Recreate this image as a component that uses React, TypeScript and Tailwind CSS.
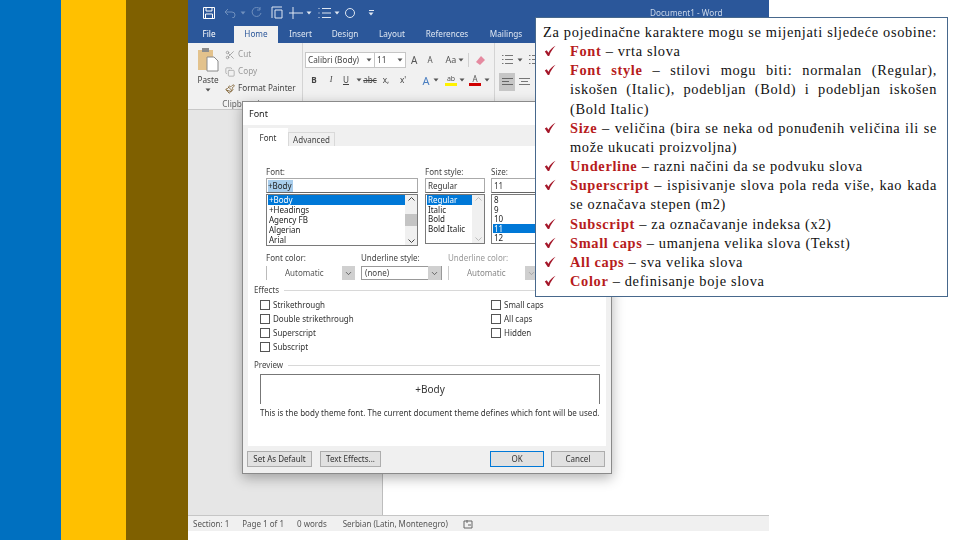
import React from 'react'
import { ChevronDown, Copy, Paintbrush, Scissors } from 'lucide-react'

const tabs = [
  { label: 'Insert', w: 'w-[45px]' },
  { label: 'Design', w: 'w-[44px]' },
  { label: 'Layout', w: 'w-[50px]' },
  { label: 'References', w: 'w-[60px]' },
  { label: 'Mailings', w: 'w-[58px]' },
]

const items = [
  { head: 'Font', lines: [' – vrta slova'] },
  {
    head: 'Font style',
    lines: [' – stilovi mogu biti: normalan (Regular),', 'iskošen (Italic), podebljan (Bold) i podebljan iskošen', '(Bold Italic)'],
  },
  { head: 'Size', lines: [' – veličina (bira se neka od ponuđenih veličina ili se', 'može ukucati proizvoljna)'] },
  { head: 'Underline', lines: [' – razni načini da se podvuku slova'] },
  { head: 'Superscript', lines: [' – ispisivanje slova pola reda više, kao kada', 'se označava stepen (m2)'] },
  { head: 'Subscript', lines: [' – za označavanje indeksa (x2)'] },
  { head: 'Small caps', lines: [' – umanjena velika slova (Tekst)'] },
  { head: 'All caps', lines: [' – sva velika slova'] },
  { head: 'Color', lines: [' – definisanje boje slova'] },
]

const Caret = ({ color = '#555' }: { color?: string }) => (
  <svg width="6" height="4" viewBox="0 0 6 4" className="shrink-0">
    <path d="M0.5 0.5h5L3 3.5z" fill={color} />
  </svg>
)

const Check = () => (
  <svg width="12" height="12" viewBox="0 0 12 12" className="mt-[2px] shrink-0">
    <path d="M0.8 6.4L2.8 5.2 4.4 7.8C6 4.800 8.400 2.400 11.600 0.800 9 3.400 6.800 6.600 5.200 11H3.800Z" fill="#a5182a" />
  </svg>
)

const ComboArrow = ({ disabled = false }: { disabled?: boolean }) => (
  <div className={`flex h-[14px] w-[13px] items-center justify-center ${disabled ? 'bg-[#cfcfcf]' : 'bg-[#d0d0d0]'}`}>
    <ChevronDown size={9} color={disabled ? '#9a9a9a' : '#444'} />
  </div>
)

const ListBox = ({
  rows,
  selected,
  w,
  h,
  rowClass,
  pale = false,
}: {
  rows: string[]
  selected: number
  w: string
  h: string
  rowClass: string
  pale?: boolean
}) => (
  <div className={`flex border border-[#7a7a7a] bg-white pl-[1px] ${w} ${h}`}>
    <div className="min-w-0 flex-1 overflow-hidden">
      {rows.map((r, i) => (
        <div
          key={r}
          className={`pl-[1px] text-[8px] ${rowClass} ${i === selected ? 'bg-[#0078d7] text-white' : 'text-[#222]'}`}
        >
          {r}
        </div>
      ))}
    </div>
    <div className="flex w-[12px] shrink-0 flex-col items-center justify-between bg-[#f0f0f0] py-[2px]">
      <svg width="7" height="4" viewBox="0 0 7 4">
        <path d="M0.5 3.5L3.5 0.5 6.5 3.5" fill="none" stroke={pale ? '#bbb' : '#444'} />
      </svg>
      {!pale && <div className="h-[12px] w-full bg-[#c4c4c4]" />}
      <svg width="7" height="4" viewBox="0 0 7 4" className={pale ? 'mt-auto' : ''}>
        <path d="M0.5 0.5L3.5 3.5 6.5 0.5" fill="none" stroke={pale ? '#bbb' : '#444'} />
      </svg>
    </div>
  </div>
)

const Effect = ({ label }: { label: string }) => (
  <div className="flex h-[14px] items-center gap-[3px]">
    <div className="h-[10px] w-[10px] border border-[#555] bg-white" />
    <span className="text-[8px] text-[#333]">{label}</span>
  </div>
)

const FieldLabel = ({ children }: { children: React.ReactNode }) => (
  <div className="flex items-center gap-[5px]">
    <span className="text-[8px] leading-[10px] text-[#444]">{children}</span>
    <div className="h-px flex-1 bg-[#d8d8d8]" />
  </div>
)

const FootButton = ({ label, w, ok = false }: { label: string; w: string; ok?: boolean }) => (
  <div
    className={`flex h-[16px] items-center justify-center border text-[8px] text-[#333] ${w} ${ok ? 'border-[#0078d7] bg-[#e1e1e1]' : 'border-[#adadad] bg-[#e1e1e1]'}`}
  >
    {label}
  </div>
)

const FontDialog = () => (
  <div
    className="absolute left-[54px] top-[101px] flex h-[373px] w-[370px] flex-col border border-[#8a8a8a] bg-[#f0f0f0] shadow-[0_4px_12px_rgba(0,0,0,0.3)]"
    style={{ fontFamily: '"Noto Sans", "Liberation Sans", sans-serif' }}
  >
    <div className="flex h-[23px] shrink-0 items-center bg-white pl-[6px] text-[9px] text-[#222]">Font</div>
    <div className="flex h-[21px] shrink-0 items-end pl-[5px]">
      <div className="flex h-[18px] w-[40px] items-center justify-center bg-white pt-[1px] text-[8px] text-[#333]">Font</div>
      <div className="flex h-[14px] w-[47px] items-center justify-center border border-b-0 border-[#d9d9d9] text-[8px] text-[#444]">
        Advanced
      </div>
    </div>
    <div className="mx-[5px] flex h-[300px] shrink-0 flex-col bg-white px-[6px] pt-[21px]">
      <div className="flex gap-[7px] pl-[12px]">
        <div className="flex w-[152px] flex-col">
          <div className="h-[11px] text-[8px] leading-[10px] text-[#444]">Font:</div>
          <div className="mb-px flex h-[15px] items-center border border-[#aaa] border-b-[#666] pl-[1px] text-[8px] text-[#222]">
            <span className="bg-[#a8cdec] pr-[1px]">+Body</span>
          </div>
          <ListBox
            w="w-[152px]"
            h="h-[52px]"
            rowClass="h-[10px] leading-[10px]"
            selected={0}
            rows={['+Body', '+Headings', 'Agency FB', 'Algerian', 'Arial']}
          />
        </div>
        <div className="flex w-[60px] flex-col">
          <div className="h-[11px] text-[8px] leading-[10px] text-[#444]">Font style:</div>
          <div className="mb-px flex h-[15px] items-center border border-[#aaa] border-b-[#666] pl-[2px] text-[8px] text-[#333]">
            Regular
          </div>
          <ListBox
            w="w-[60px]"
            h="h-[50px]"
            rowClass="h-[9.5px] leading-[9.5px]"
            selected={0}
            pale
            rows={['Regular', 'Italic', 'Bold', 'Bold Italic']}
          />
        </div>
        <div className="ml-[-1px] flex w-[60px] flex-col">
          <div className="h-[11px] text-[8px] leading-[10px] text-[#444]">Size:</div>
          <div className="mb-px flex h-[15px] items-center border border-[#aaa] border-b-[#666] pl-[2px] text-[8px] text-[#333]">
            11
          </div>
          <ListBox
            w="w-[60px]"
            h="h-[50px]"
            rowClass="h-[9.5px] leading-[9.5px]"
            selected={3}
            rows={['8', '9', '10', '11', '12']}
          />
        </div>
      </div>

      <div className="mt-[7px] flex gap-[6px] pl-[12px]">
        <div className="flex w-[89px] flex-col">
          <div className="h-[13px] text-[8px] leading-[10px] text-[#444]">Font color:</div>
          <div className="flex h-[14px] items-center justify-between border-l border-[#bbb] pl-[18px] text-[8px] text-[#555]">
            Automatic
            <ComboArrow />
          </div>
        </div>
        <div className="flex w-[81px] flex-col">
          <div className="h-[13px] text-[8px] leading-[10px] text-[#444]">Underline style:</div>
          <div className="flex h-[14px] items-center justify-between border border-[#999] pl-[3px] text-[8px] text-[#444]">
            (none)
            <ComboArrow />
          </div>
        </div>
        <div className="flex w-[90px] flex-col">
          <div className="h-[13px] text-[8px] leading-[10px] text-[#999]">Underline color:</div>
          <div className="flex h-[14px] items-center justify-between border-l border-[#ccc] pl-[18px] text-[8px] text-[#888]">
            Automatic
            <ComboArrow disabled />
          </div>
        </div>
      </div>

      <div className="mt-[5px]">
        <FieldLabel>Effects</FieldLabel>
      </div>
      <div className="mt-[3px] flex pl-[6px]">
        <div className="flex w-[231px] flex-col">
          <Effect label="Strikethrough" />
          <Effect label="Double strikethrough" />
          <Effect label="Superscript" />
          <Effect label="Subscript" />
        </div>
        <div className="flex flex-col">
          <Effect label="Small caps" />
          <Effect label="All caps" />
          <Effect label="Hidden" />
        </div>
      </div>

      <div className="mt-[6px]">
        <FieldLabel>Preview</FieldLabel>
      </div>
      <div className="ml-[6px] mt-[4px] flex h-[30px] w-[340px] items-center justify-center border border-b-0 border-[#777] text-[10px] text-[#333]">
        +Body
      </div>
      <div className="ml-[6px] mt-[4px] whitespace-nowrap text-[8px] leading-[10px] tracking-[0.03px] text-[#333]">
        This is the body theme font. The current document theme defines which font will be used.
      </div>
    </div>
    <div className="flex flex-1 items-center justify-between px-[4px] pb-[1px]">
      <div className="flex gap-[8px]">
        <FootButton label="Set As Default" w="w-[65px]" />
        <FootButton label="Text Effects..." w="w-[61px]" />
      </div>
      <div className="flex gap-[7px] pr-[2px]">
        <FootButton label="OK" w="w-[54px]" ok />
        <FootButton label="Cancel" w="w-[54px]" />
      </div>
    </div>
  </div>
)

const Ribbon = () => (
  <div
    className="flex h-[67px] shrink-0 border-b border-[#c8c8c8] bg-[#f1f1f1]"
    style={{ fontFamily: '"Noto Sans", "Liberation Sans", sans-serif' }}
  >
    <div className="flex w-[115px] shrink-0 flex-col border-r border-[#d4d4d4] pt-[5px]">
      <div className="flex pl-[6px]">
        <div className="flex w-[28px] flex-col items-center">
          <svg width="22" height="24" viewBox="0 0 22 24">
            <rect x="1" y="2" width="15" height="20" fill="#e3c28c" />
            <rect x="5" y="0" width="7" height="4" fill="#8d8d8d" />
            <path d="M10 9h7l4 4v10H10z" fill="#fff" stroke="#8a8a8a" />
          </svg>
          <span className="mt-[3px] text-[8.2px] leading-[10px] text-[#444]">Paste</span>
          <div className="mt-[3px]">
            <Caret />
          </div>
        </div>
        <div className="ml-[3px] flex flex-col gap-[4px]">
          <div className="flex h-[13px] items-center gap-[3px] text-[8.2px] text-[#9a9a9a]">
            <Scissors size={10} color="#9a9a9a" />
            Cut
          </div>
          <div className="flex h-[13px] items-center gap-[3px] text-[8.2px] text-[#9a9a9a]">
            <Copy size={10} color="#a8a8a8" />
            Copy
          </div>
          <div className="flex h-[13px] items-center gap-[3px] whitespace-nowrap text-[8.2px] text-[#444]">
            <Paintbrush size={10} color="#7a5a2a" />
            Format Painter
          </div>
        </div>
      </div>
      <div className="mt-[4px] pr-[8px] text-center text-[8.2px] leading-[10px] text-[#666]">Clipboard</div>
    </div>

    <div className="flex w-[192px] shrink-0 flex-col border-r border-[#d4d4d4] pl-[2px] pt-[9px]">
      <div className="flex items-center">
        <div className="flex h-[16px] w-[70px] items-center justify-between border border-[#c6c6c6] bg-white px-[2px] text-[8.2px] text-[#444]">
          Calibri (Body)
          <Caret />
        </div>
        <div className="flex h-[16px] w-[31px] items-center justify-between border border-l-0 border-[#c6c6c6] bg-white px-[2px] text-[8.2px] text-[#444]">
          11
          <Caret />
        </div>
        <span className="ml-[5px] text-[10px] text-[#555]">A</span>
        <span className="ml-[10px] text-[8px] text-[#555]">A</span>
        <span className="ml-[13px] text-[9px] text-[#555]">Aa</span>
        <div className="ml-[2px]">
          <Caret />
        </div>
        <div className="ml-[4px] h-[14px] w-px bg-[#d0d0d0]" />
        <svg width="11" height="11" viewBox="0 0 11 11" className="ml-[6px]">
          <path d="M1 7l5-6 4 4-5 5z" fill="#e58aa0" />
        </svg>
      </div>
      <div className="ml-[-1px] mt-[6px] flex items-center text-[8.2px] text-[#444]">
        <span className="w-[20px] text-center font-bold">B</span>
        <span className="w-[14px] text-center italic" style={{ fontFamily: '"Liberation Serif", serif' }}>
          I
        </span>
        <span className="w-[16px] text-center underline">U</span>
        <div className="ml-[2px]">
          <Caret />
        </div>
        <span className="w-[16px] text-center line-through">abc</span>
        <span className="w-[16px] text-center">x,</span>
        <span className="w-[18px] text-center">x'</span>
        <span className="ml-[8px] w-[12px] text-center text-[11px] leading-none text-[#4a7ec0]">A</span>
        <div className="ml-[1px]">
          <Caret />
        </div>
        <div className="ml-[6px] flex w-[12px] flex-col items-center border-b-[3px] border-[#fff200] text-[7px] leading-[8px] text-[#555]">
          ab
        </div>
        <div className="ml-[2px]">
          <Caret />
        </div>
        <div className="ml-[4px] flex w-[12px] flex-col items-center border-b-[3px] border-[#d00000] text-[8px] leading-[8px] text-[#555]">
          A
        </div>
        <div className="ml-[3px]">
          <Caret />
        </div>
      </div>
    </div>

    <div className="flex flex-1 flex-col pl-[4px] pt-[11px]">
      <div className="flex items-center gap-[3px] pl-[3px]">
        <svg width="12" height="11" viewBox="0 0 12 11">
          <path d="M3 1.5h8M3 5.500h8M3 9.500h8M0 1.5h1.500M0 5.500h1.500M0 9.500h1.500" stroke="#777" />
        </svg>
        <Caret />
        <svg width="12" height="11" viewBox="0 0 12 11" className="ml-[3px]">
          <path d="M3 1.5h8M3 5.500h8M3 9.500h8M0 1.5h1.500M0 5.500h1.500M0 9.500h1.500" stroke="#777" />
        </svg>
      </div>
      <div className="mt-[8px] flex items-center gap-[1px]">
        <div className="flex h-[18px] w-[16px] items-center justify-center bg-[#c6c6c6]">
          <svg width="11" height="9" viewBox="0 0 11 9">
            <path d="M0 .5h11M0 3.500h7M0 6.500h11" stroke="#666" />
          </svg>
        </div>
        <div className="flex h-[18px] w-[16px] items-center justify-center">
          <svg width="11" height="9" viewBox="0 0 11 9">
            <path d="M0 .5h11M2 3.500h7M0 6.500h11" stroke="#777" />
          </svg>
        </div>
      </div>
    </div>
  </div>
)

const TitleBar = () => (
  <div
    className="flex h-[43px] shrink-0 flex-col bg-[#2b579a] text-white"
    style={{ fontFamily: '"Noto Sans", "Liberation Sans", sans-serif' }}
  >
    <div className="flex h-[25px] items-center pl-[15px]">
      <svg width="12" height="12" viewBox="0 0 12 12">
        <path d="M.5.5h11v11H.5zM3 .5v3.500h6V.5M2.500 11.500V7h7v4.500" fill="none" stroke="#fff" />
      </svg>
      <svg width="12" height="10" viewBox="0 0 12 10" className="ml-[9px]">
        <path d="M1 4h7a3 3 0 010 6M1 4l3-3M1 4l3 3" fill="none" stroke="#6f8fbd" />
      </svg>
      <div className="ml-[4px]">
        <Caret color="#6f8fbd" />
      </div>
      <svg width="11" height="11" viewBox="0 0 11 11" className="ml-[5px]">
        <path d="M9 2a4.500 4.500 0 10 1 4M9 0v3H6" fill="none" stroke="#6f8fbd" />
      </svg>
      <svg width="12" height="13" viewBox="0 0 12 13" className="ml-[9px]">
        <path d="M1 1v11M1 1h10M4 4h7v8H4z" fill="none" stroke="#dfe7f2" />
      </svg>
      <svg width="14" height="12" viewBox="0 0 14 12" className="ml-[6px]">
        <path d="M0 6h14M4 0v12" fill="none" stroke="#dfe7f2" />
      </svg>
      <div className="ml-[3px]">
        <Caret color="#dfe7f2" />
      </div>
      <svg width="13" height="12" viewBox="0 0 13 12" className="ml-[6px]">
        <path d="M4 1.500h9M4 6h9M4 10.500h9M1 1v1M1 5.500v1M1 10v1" fill="none" stroke="#dfe7f2" />
      </svg>
      <div className="ml-[3px]">
        <Caret color="#dfe7f2" />
      </div>
      <svg width="10" height="10" viewBox="0 0 10 10" className="ml-[5px]">
        <circle cx="5" cy="5" r="4.500" fill="none" stroke="#dfe7f2" />
      </svg>
      <div className="ml-[13px] flex flex-col items-center gap-[1px]">
        <div className="h-px w-[5px] bg-[#dfe7f2]" />
        <Caret color="#dfe7f2" />
      </div>
      <span className="ml-[276px] mt-[2px] whitespace-nowrap text-[8.2px] text-[#c9d6e8]">Document1 - Word</span>
    </div>
    <div className="flex h-[18px] items-end text-[8.2px]">
      <div className="flex h-[17px] w-[46px] items-center justify-center pr-[4px]">File</div>
      <div className="flex h-[17px] w-[44px] items-center justify-center bg-[#f1f1f1] text-[#2b579a]">Home</div>
      {tabs.map((t) => (
        <div key={t.label} className={`flex h-[17px] items-center justify-center text-[#dfe7f2] ${t.w}`}>
          {t.label}
        </div>
      ))}
    </div>
  </div>
)

const TextBox = () => (
  <div
    className="absolute left-[535px] top-[17px] h-[280px] w-[413px] border border-[#47688c] bg-white pl-[7px] pr-[10px] pt-[5px] text-[14.4px] leading-[19.15px] tracking-[0.65px] text-[#111]"
    style={{ fontFamily: '"Liberation Serif", serif' }}
  >
    <div className="[text-align-last:justify]">Za pojedinačne karaktere mogu se mijenjati sljedeće osobine:</div>
    {items.map((item) => (
      <div key={item.head} className="flex">
        <div className="w-[27px] shrink-0 pl-[1px] pt-[1px]">
          <Check />
        </div>
        <div className="min-w-0 flex-1">
          {item.lines.map((line, i) => (
            <div
              key={line}
              className={`whitespace-nowrap ${i < item.lines.length - 1 ? '[text-align-last:justify]' : ''}`}
            >
              {i === 0 && <b className="font-bold text-[#b71c1c]">{item.head}</b>}
              {line}
            </div>
          ))}
        </div>
      </div>
    ))}
  </div>
)

export default function App() {
  return (
    <div className="relative flex h-[540px] w-[960px] overflow-hidden bg-white">
      <div className="w-[61px] shrink-0 bg-[#0070c0]" />
      <div className="w-[65px] shrink-0 bg-[#ffc000]" />
      <div className="w-[62px] shrink-0 bg-[#7f6000]" />
      <div className="relative flex h-[531px] w-[581px] shrink-0 flex-col blur-[0.35px]">
        <TitleBar />
        <Ribbon />
        <div className="flex min-h-0 flex-1">
          <div className="w-[195px] shrink-0 border-r border-[#bdbdbd] bg-[#e6e6e6]" />
          <div className="flex-1 bg-white" />
        </div>
        <div
          className="flex h-[16px] shrink-0 items-center gap-[13px] border-t border-[#c6c6c6] bg-[#f0f0f0] pl-[5px] text-[8px] text-[#555]"
          style={{ fontFamily: '"Noto Sans", "Liberation Sans", sans-serif' }}
        >
          <span>Section: 1</span>
          <span>Page 1 of 1</span>
          <span>0 words</span>
          <span className="ml-[3px]">Serbian (Latin, Montenegro)</span>
          <svg width="10" height="10" viewBox="0 0 10 10" className="ml-[2px]">
            <path d="M1 2h8v7H1zM4 1v3M5 6h3" fill="none" stroke="#666" />
          </svg>
        </div>
        <FontDialog />
      </div>
      <TextBox />
    </div>
  )
}
